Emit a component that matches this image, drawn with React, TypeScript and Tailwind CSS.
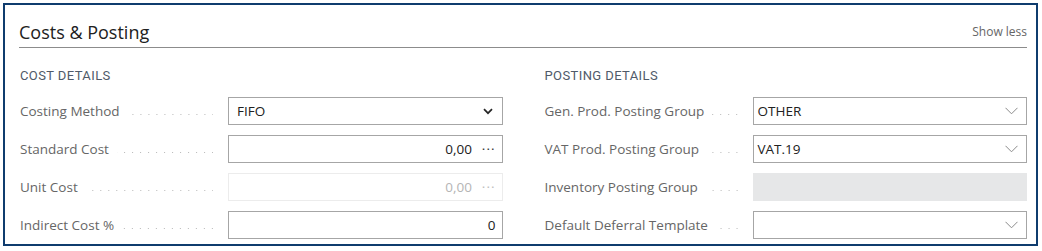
import React from "react";

const font = "font-['Open_Sans','Noto_Sans',sans-serif]";

function Dots() {
  return (
    <span className="flex-1 ml-[8px] mt-[7px] h-px bg-[linear-gradient(to_left,#b8b8b8_1px,transparent_1px)] bg-[length:8px_1px] bg-repeat-x bg-right" />
  );
}

function ChevronBold() {
  return (
    <svg width="10" height="7" viewBox="0 0 10 7" className="shrink-0">
      <path d="M1 1.2 L5 5.2 L9 1.2" fill="none" stroke="#262626" strokeWidth="1.7" />
    </svg>
  );
}

function ChevronThin() {
  return (
    <svg width="13" height="8" viewBox="0 0 13 8" className="shrink-0">
      <path d="M0.5 0.8 L6.5 6.8 L12.5 0.8" fill="none" stroke="#8a8a8a" strokeWidth="1" />
    </svg>
  );
}

function Ellipsis({ light }: { light?: boolean }) {
  return (
    <span className={`ml-[10px] tracking-[1px] ${light ? "text-[#bdbdbd]" : "text-[#333]"}`}>···</span>
  );
}

type FieldKind =
  | { type: "select-bold"; value: string }
  | { type: "select"; value: string }
  | { type: "number"; value: string; ellipsis?: boolean; disabled?: boolean }
  | { type: "filled" };

function Field({ f }: { f: FieldKind }) {
  if (f.type === "select-bold") {
    return (
      <div className="h-[28px] border border-[#a6a6a6] flex items-center justify-between pl-[8px] pr-[9px] text-[13.5px] text-[#212121]">
        <span>{f.value}</span>
        <ChevronBold />
      </div>
    );
  }
  if (f.type === "select") {
    return (
      <div className="h-[28px] border border-[#a6a6a6] flex items-center justify-between pl-[4px] pr-[8px] text-[13.5px] text-[#212121]">
        <span>{f.value}</span>
        <ChevronThin />
      </div>
    );
  }
  if (f.type === "filled") {
    return <div className="h-[28px] bg-[#e6e7e8]" />;
  }
  return (
    <div
      className={`h-[28px] border flex items-center justify-end pr-[6px] text-[13.5px] ${
        f.disabled ? "border-[#ececec] text-[#b5b5b5]" : "border-[#a6a6a6] text-[#212121]"
      }`}
    >
      <span>{f.value}</span>
      {f.ellipsis && <Ellipsis light={f.disabled} />}
    </div>
  );
}

function Row({ label, f }: { label: string; f: FieldKind }) {
  return (
    <div className="grid grid-cols-[209px_1fr] items-center h-[28px]">
      <div className="flex items-center pl-px pr-[15px] text-[13.5px] text-[#666666] whitespace-nowrap">
        <span>{label}</span>
        <Dots />
      </div>
      <Field f={f} />
    </div>
  );
}

function Section({ title, rows }: { title: string; rows: { label: string; f: FieldKind }[] }) {
  return (
    <div className="flex flex-col">
      <div className="h-[16px] leading-[16px] text-[13px] tracking-[0.4px] text-[#4f5a69] uppercase font-['Roboto',sans-serif] pl-px">
        {title}
      </div>
      <div className="mt-[13px] flex flex-col gap-[10px]">
        {rows.map((r) => (
          <Row key={r.label} label={r.label} f={r.f} />
        ))}
      </div>
    </div>
  );
}

export default function App() {
  return (
    <div className={`bg-white p-[3px] w-[1042px] h-[251px] ${font}`}>
      <div className="w-[1035px] h-[243px] border-2 border-[#0f3c6e] pl-[14px] pr-[9px]">
        <div className="h-[43px] pt-[12px] flex items-center justify-between border-b border-[#8c8c8c]">
          <span className="text-[18px] leading-[24px] text-[#212121]">Costs &amp; Posting</span>
          <span className="text-[12px] leading-[16px] text-[#666]">Show less</span>
        </div>
        <div className="mt-[20px] grid grid-cols-2 gap-x-[41px]">
          <Section
            title="Cost Details"
            rows={[
              { label: "Costing Method", f: { type: "select-bold", value: "FIFO" } },
              { label: "Standard Cost", f: { type: "number", value: "0,00", ellipsis: true } },
              { label: "Unit Cost", f: { type: "number", value: "0,00", ellipsis: true, disabled: true } },
              { label: "Indirect Cost %", f: { type: "number", value: "0" } },
            ]}
          />
          <Section
            title="Posting Details"
            rows={[
              { label: "Gen. Prod. Posting Group", f: { type: "select", value: "OTHER" } },
              { label: "VAT Prod. Posting Group", f: { type: "select", value: "VAT.19" } },
              { label: "Inventory Posting Group", f: { type: "filled" } },
              { label: "Default Deferral Template", f: { type: "select", value: "" } },
            ]}
          />
        </div>
      </div>
    </div>
  );
}
